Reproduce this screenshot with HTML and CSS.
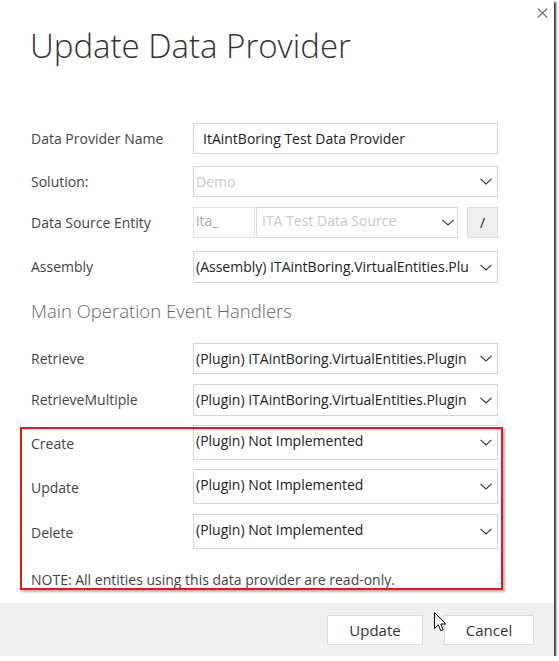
FILE: index.html
```html
<!DOCTYPE html>
<html lang="en">
<head>
<meta charset="utf-8">
<title>Update Data Provider</title>
<link rel="stylesheet" href="styles.css">
</head>
<body>
<div class="dialog">
  <header class="header">
    <h1 class="title">Update Data Provider</h1>
    <button class="close" aria-label="Close">
      <svg width="11" height="10" viewBox="0 0 11 10"><path d="M0.8 0.5 L10.2 9.5 M10.2 0.5 L0.8 9.5" stroke="#707070" stroke-width="1.1" fill="none"/></svg>
    </button>
  </header>

  <main class="content">
    <div class="row r-name">
      <span class="label">Data Provider Name</span>
      <div class="field input"><span class="value">ItAintBoring Test Data Provider</span></div>
    </div>
    <div class="row r-solution">
      <span class="label">Solution:</span>
      <div class="field select disabled">
        <span class="value">Demo</span>
        <svg class="chev" width="12" height="7" viewBox="0 0 12 7"><path d="M0.5 0.8 L6 6 L11.5 0.8" stroke="#333" stroke-width="1.1" fill="none"/></svg>
      </div>
    </div>
    <div class="row r-entity">
      <span class="label">Data Source Entity</span>
      <div class="combo">
        <div class="field prefix"><span class="value">ita_</span></div>
        <div class="field select disabled entity">
          <span class="value">ITA Test Data Source</span>
          <svg class="chev" width="12" height="7" viewBox="0 0 12 7"><path d="M0.5 0.8 L6 6 L11.5 0.8" stroke="#333" stroke-width="1.1" fill="none"/></svg>
        </div>
        <button class="slash">/</button>
      </div>
    </div>
    <div class="row r-assembly">
      <span class="label">Assembly</span>
      <div class="field select">
        <span class="value">(Assembly) ITAintBoring.VirtualEntities.Plu</span>
        <svg class="chev" width="12" height="7" viewBox="0 0 12 7"><path d="M0.5 0.8 L6 6 L11.5 0.8" stroke="#333" stroke-width="1.1" fill="none"/></svg>
      </div>
    </div>

    <h2 class="section">Main Operation Event Handlers</h2>

    <div class="row r-retrieve">
      <span class="label">Retrieve</span>
      <div class="field select">
        <span class="value">(Plugin) ITAintBoring.VirtualEntities.Plugin</span>
        <svg class="chev" width="12" height="7" viewBox="0 0 12 7"><path d="M0.5 0.8 L6 6 L11.5 0.8" stroke="#333" stroke-width="1.1" fill="none"/></svg>
      </div>
    </div>
    <div class="row r-multiple">
      <span class="label">RetrieveMultiple</span>
      <div class="field select">
        <span class="value">(Plugin) ITAintBoring.VirtualEntities.Plugin</span>
        <svg class="chev" width="12" height="7" viewBox="0 0 12 7"><path d="M0.5 0.8 L6 6 L11.5 0.8" stroke="#333" stroke-width="1.1" fill="none"/></svg>
      </div>
    </div>
    <div class="row tall r-create">
      <span class="label">Create</span>
      <div class="field select">
        <span class="value">(Plugin) Not Implemented</span>
        <svg class="chev" width="12" height="7" viewBox="0 0 12 7"><path d="M0.5 0.8 L6 6 L11.5 0.8" stroke="#333" stroke-width="1.1" fill="none"/></svg>
      </div>
    </div>
    <div class="row tall r-update">
      <span class="label">Update</span>
      <div class="field select">
        <span class="value">(Plugin) Not Implemented</span>
        <svg class="chev" width="12" height="7" viewBox="0 0 12 7"><path d="M0.5 0.8 L6 6 L11.5 0.8" stroke="#333" stroke-width="1.1" fill="none"/></svg>
      </div>
    </div>
    <div class="row tall r-delete">
      <span class="label">Delete</span>
      <div class="field select">
        <span class="value">(Plugin) Not Implemented</span>
        <svg class="chev" width="12" height="7" viewBox="0 0 12 7"><path d="M0.5 0.8 L6 6 L11.5 0.8" stroke="#333" stroke-width="1.1" fill="none"/></svg>
      </div>
    </div>

    <p class="note">NOTE: All entities using this data provider are read-only.</p>
  </main>

  <footer class="footer">
    <button class="btn btn-update">Update</button>
    <button class="btn btn-cancel">Cancel</button>
  </footer>

  <div class="highlight"></div>

  <svg class="cursor" width="13" height="20" viewBox="0 0 13 20">
    <path d="M0.5 0.5 L0.5 16.5 L4.3 12.8 L6.8 18.7 L9.2 17.7 L6.8 12 L11.8 12 Z" fill="#fff" stroke="#000" stroke-width="1" stroke-linejoin="miter"/>
  </svg>
</div>
</body>
</html>
```

FILE: styles.css
```css
* { box-sizing: border-box; }

html, body {
  margin: 0;
  padding: 0;
  background: #fff;
}

body {
  font-family: "Open Sans", "Noto Sans", sans-serif;
  color: #444;
}

.dialog {
  position: relative;
  width: 554px;
  height: 656px;
  background: #fff;
  box-shadow: 2px 2px 2px 0 rgba(0, 0, 0, 0.8);
  display: flex;
  flex-direction: column;
}

.header {
  display: flex;
  justify-content: space-between;
  align-items: flex-start;
  padding: 8px 6px 0 30px;
  height: 66px;
}

.title {
  margin: 18px 0 0;
  font-size: 33px;
  line-height: 40px;
  font-weight: 300;
  color: #333;
}

.close {
  border: 0;
  background: none;
  padding: 0;
  width: 11px;
  height: 10px;
  display: block;
}
.close svg { display: block; }

.content {
  flex: 1;
  padding: 57px 0 0 31px;
}

.row {
  display: flex;
  align-items: center;
  height: 31px;
}

.row.tall { height: 35px; }

.r-solution { margin-top: 12px; }
.r-entity { margin-top: 10px; }
.r-assembly { margin-top: 13px; height: 32px; }
.r-multiple { margin-top: 10px; height: 32px; }
.r-create { margin-top: 9px; }
.r-update { margin-top: 9px; }
.r-delete { margin-top: 10px; height: 34px; }

.label {
  width: 162px;
  flex: none;
  font-size: 14px;
  color: #444;
  line-height: 20px;
}

.tall .label { padding-top: 3px; }

.field {
  height: 100%;
  width: 305px;
  border: 1px solid #d6d6d6;
  display: flex;
  align-items: center;
  font-size: 14px;
  color: #222;
  background: #fff;
}

.field .value {
  flex: 1;
  white-space: nowrap;
  overflow: hidden;
  line-height: 20px;
}

.input { padding-left: 9px; }

.select { padding: 0 5px 0 2px; }

.tall .select .value { align-self: flex-start; padding-top: 5px; }

.chev {
  flex: none;
  display: block;
  margin-left: 4px;
}

.disabled { color: #c8c8c8; }

.combo {
  display: flex;
  height: 100%;
  width: 305px;
}

.prefix {
  width: 62px;
  padding-left: 2px;
  color: #a8a8a8;
  border-color: #e2e2e2;
}
.prefix .value { align-self: flex-start; padding-top: 3px; }

.entity {
  width: 202px;
  margin-left: 1px;
  padding-left: 5px;
  padding-right: 3px;
  border-color: #dadada;
}
.entity .value { align-self: flex-start; padding-top: 3px; }

.slash {
  margin-left: 9px;
  width: 31px;
  height: 31px;
  background: #efefef;
  border: 1px solid #dcdcdc;
  font-family: inherit;
  font-size: 14px;
  color: #222;
  padding: 0;
}

.section {
  margin: 16px 0 20px;
  font-size: 18.5px;
  line-height: 24px;
  font-weight: 300;
  color: #666;
}

.note {
  margin: 21px 0 0;
  font-size: 14px;
  line-height: 20px;
  color: #444;
}

.footer {
  flex: none;
  height: 53px;
  background: #f0f0f0;
  display: flex;
  justify-content: flex-end;
  align-items: flex-start;
  gap: 21px;
  padding: 12px 20px 0 0;
}

.btn {
  height: 30px;
  background: #fff;
  border: 1px solid #dcdcdc;
  font-family: inherit;
  font-size: 15px;
  color: #333;
  padding: 0;
}
.btn-update { width: 96px; }
.btn-cancel { width: 90px; }

.highlight {
  position: absolute;
  left: 20px;
  top: 427px;
  width: 483px;
  height: 163px;
  border: 2px solid #f01414;
  box-shadow: 2px 2px 2px rgba(0, 0, 0, 0.3);
  pointer-events: none;
}

.cursor {
  position: absolute;
  left: 434px;
  top: 612px;
}
```
